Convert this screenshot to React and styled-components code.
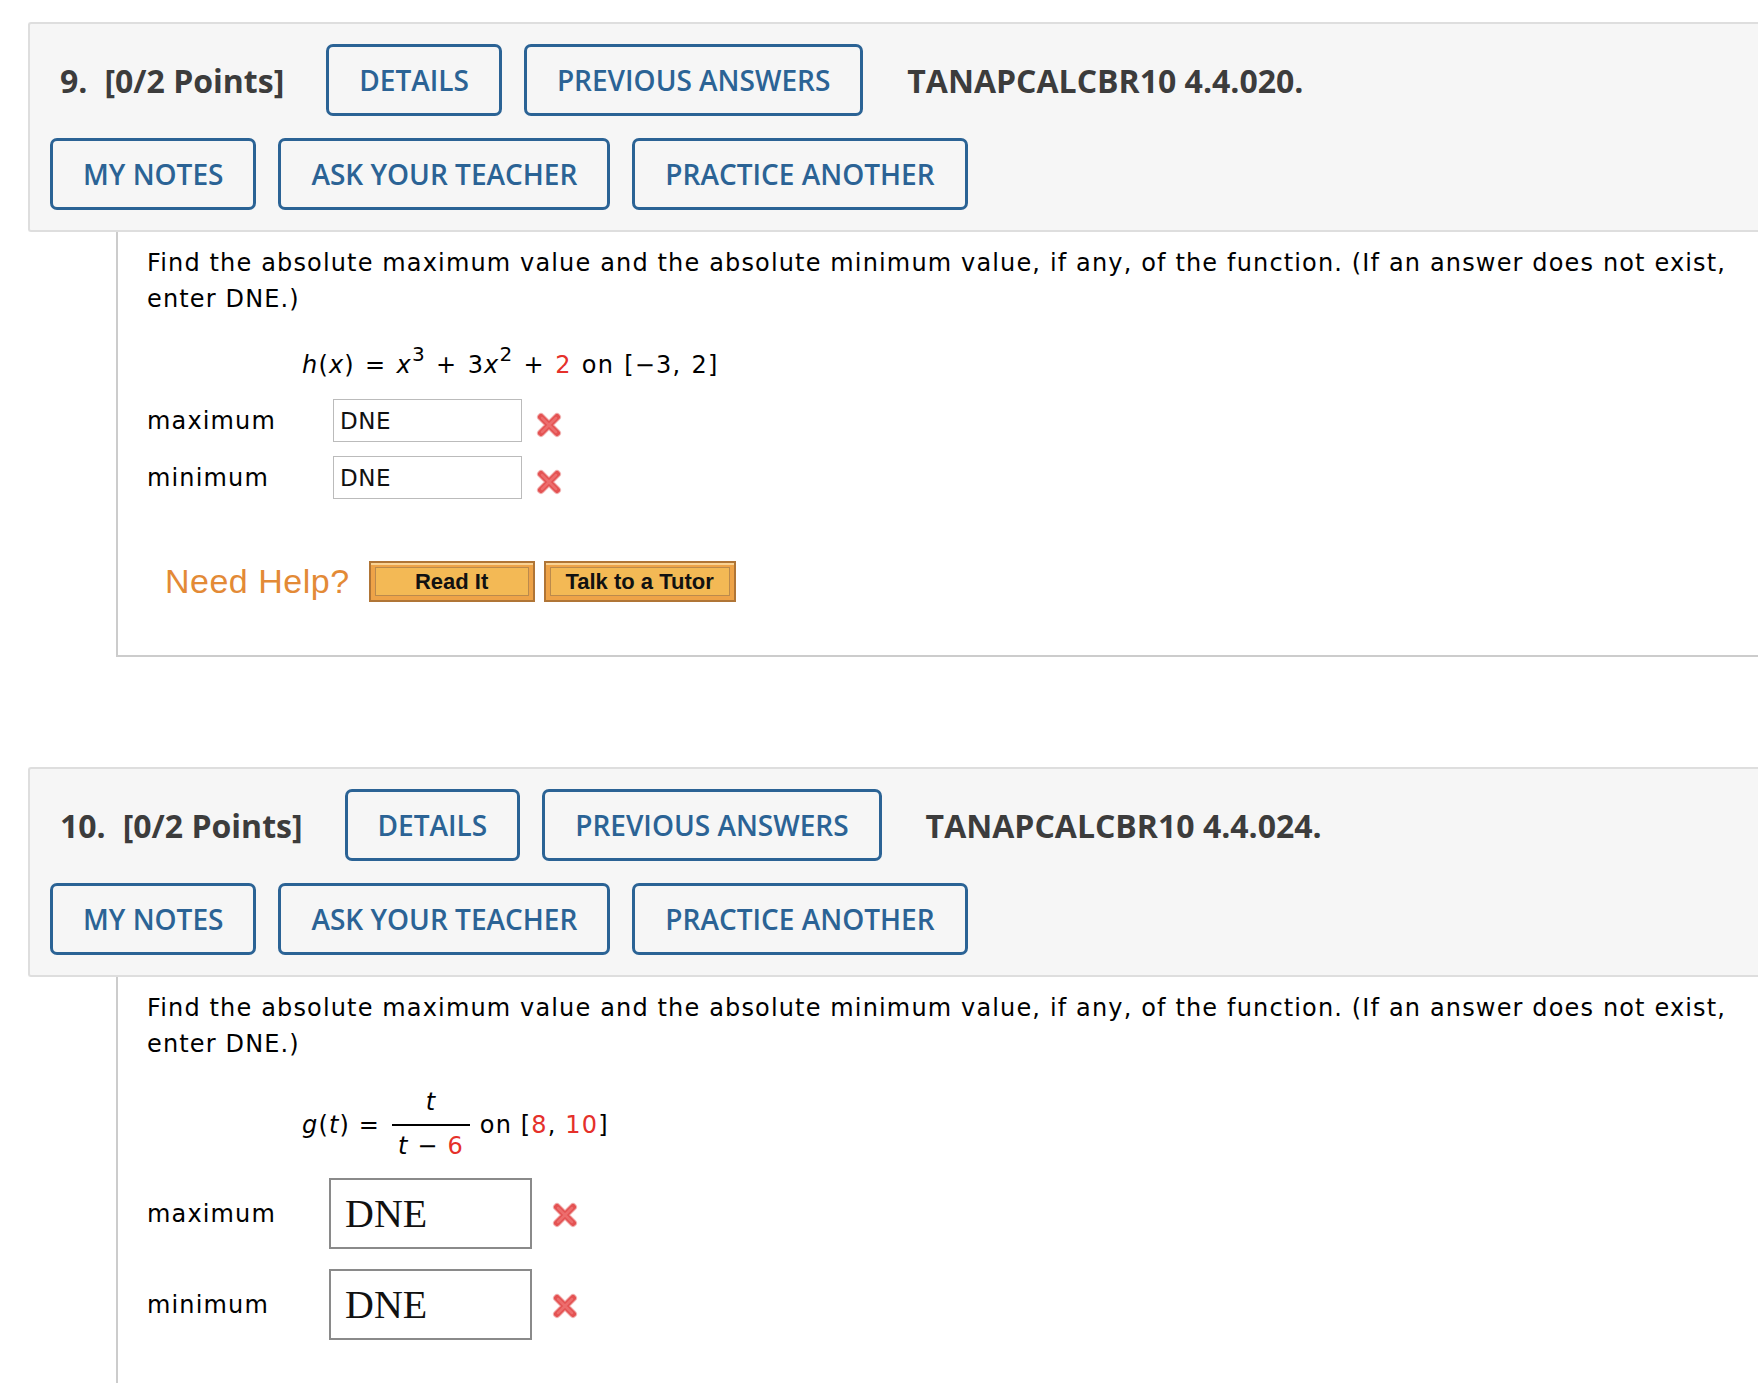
import React from 'react'
import styled, { createGlobalStyle } from 'styled-components'

const GlobalStyle = createGlobalStyle`
  html, body {
    margin: 0;
    padding: 0;
    background: #fff;
    overflow: hidden;
  }
`

const Page = styled.div`
  width: 1800px;
  padding: 22px 0 0 28px;
  box-sizing: border-box;
`

const Question = styled.section`
  display: flex;
  flex-direction: column;
  & + & {
    margin-top: 110px;
  }
`

const Header = styled.div`
  background: #f6f6f6;
  border: 2px solid #dedede;
  border-right: none;
  border-radius: 3px 0 0 3px;
  padding: 20px 0 20px 20px;
  display: flex;
  flex-direction: column;
  gap: 22px;
`

const HeaderRow = styled.div`
  display: flex;
  align-items: center;
  gap: 22px;
`

const Title = styled.h2`
  margin: 0 20px 0 10px;
  font-family: 'Open Sans', sans-serif;
  font-weight: 700;
  font-size: 32px;
  color: #3c3c3c;
  display: flex;
  gap: 17px;
`

const Ref = styled.span`
  margin-left: 22px;
  font-family: 'Open Sans', sans-serif;
  font-weight: 700;
  font-size: 32px;
  color: #3c3c3c;
`

const ActionButton = styled.button`
  height: 72px;
  box-sizing: border-box;
  padding: 0 30px;
  border: 3px solid #2b6395;
  border-radius: 7px;
  background: transparent;
  color: #2b6395;
  font-family: 'Open Sans', sans-serif;
  font-weight: 600;
  font-size: 28px;
  cursor: pointer;
`

const Body = styled.div`
  margin-left: 88px;
  border-left: 2px solid #cccccc;
  border-bottom: ${p => (p.$closed ? '2px solid #cccccc' : 'none')};
  padding: 13px 0 ${p => (p.$closed ? '53px' : '43px')} 29px;
  font-family: 'DejaVu Sans', Verdana, sans-serif;
  font-size: 24px;
  letter-spacing: 1.15px;
  color: #000;
`

const Prompt = styled.p`
  margin: 0;
  width: 1600px;
  line-height: 36px;
`

const Formula = styled.div`
  margin-top: ${p => p.$top}px;
  padding-left: 155px;
  line-height: 36px;
  word-spacing: ${p => p.$spread || 0}px;
`

const Var = styled.i`
  font-style: italic;
`

const Red = styled.span`
  color: #e5302a;
`

const Sup = styled.sup`
  font-size: 20px;
  line-height: 0;
  vertical-align: 12px;
`

const Fraction = styled.span`
  display: inline-flex;
  flex-direction: column;
  align-items: stretch;
  vertical-align: 23px;
  margin: 0 10px 0 12px;
  line-height: 28px;
`

const Numerator = styled.span`
  text-align: center;
  padding: 0 6px 8px;
  border-bottom: 2px solid #000;
`

const Denominator = styled.span`
  text-align: center;
  padding: 6px 6px 0;
`

const Answers = styled.div`
  display: grid;
  grid-template-columns: ${p => p.$label}px auto 1fr;
  align-items: center;
  row-gap: ${p => p.$gap}px;
  margin-top: ${p => p.$top}px;
`

const Label = styled.span`
  line-height: 36px;
`

const AnswerBox = styled.div`
  box-sizing: border-box;
  width: ${p => (p.$large ? 203 : 189)}px;
  height: ${p => (p.$large ? 71 : 43)}px;
  border: ${p => (p.$large ? '2px solid #8a8a8a' : '1px solid #bbbbbb')};
  padding-left: ${p => (p.$large ? 14 : 6)}px;
  display: flex;
  align-items: center;
  font-family: ${p => (p.$large ? "'Liberation Serif', serif" : "'DejaVu Sans', sans-serif")};
  font-size: ${p => (p.$large ? 40 : 23)}px;
  letter-spacing: ${p => (p.$large ? 0 : 0.5)}px;
  color: #111;
  background: #fff;
`

const Mark = styled.svg`
  margin-left: ${p => p.$left}px;
  margin-top: ${p => p.$drop}px;
`

const HelpRow = styled.div`
  display: flex;
  align-items: center;
  margin-top: 62px;
  padding-left: 18px;
`

const NeedHelp = styled.span`
  font-family: 'Liberation Sans', Arial, sans-serif;
  font-size: 34px;
  color: #e38a36;
  letter-spacing: 0.5px;
  margin-right: 19px;
`

const HelpButton = styled.button`
  width: ${p => p.$w}px;
  height: 41px;
  margin-right: 9px;
  box-sizing: border-box;
  border: 2px solid #b07536;
  background: #f3b955;
  box-shadow: inset 0 2px 0 #f9d394, inset 0 0 0 4px #eea348, inset 0 0 0 5px #bb8a4c;
  font-family: 'Liberation Sans', Arial, sans-serif;
  font-weight: 700;
  font-size: 22px;
  letter-spacing: 0;
  color: #111;
  padding: 0;
  cursor: pointer;
`

const WrongMark = ({ size, left, drop }) => (
  <Mark width={size} height={size} viewBox="0 0 28 28" $left={left} $drop={drop}>
    <g strokeLinecap="round">
      <path d="M6 6 L22 22 M22 6 L6 22" stroke="#e87a7a" strokeWidth="8" opacity="0.55" />
      <path d="M6 6 L22 22 M22 6 L6 22" stroke="#e45252" strokeWidth="6" />
      <path d="M7 7 L21 21 M21 7 L7 21" stroke="#ef7474" strokeWidth="2.5" opacity="0.8" />
    </g>
  </Mark>
)

const QuestionHeader = ({ number, code }) => (
  <Header>
    <HeaderRow>
      <Title>
        <span>{number}.</span>
        <span>[0/2 Points]</span>
      </Title>
      <ActionButton>DETAILS</ActionButton>
      <ActionButton>PREVIOUS ANSWERS</ActionButton>
      <Ref>{code}</Ref>
    </HeaderRow>
    <HeaderRow>
      <ActionButton>MY NOTES</ActionButton>
      <ActionButton>ASK YOUR TEACHER</ActionButton>
      <ActionButton>PRACTICE ANOTHER</ActionButton>
    </HeaderRow>
  </Header>
)

const promptText =
  'Find the absolute maximum value and the absolute minimum value, if any, of the function. (If an answer does not exist, enter DNE.)'

const App = () => (
  <Page>
    <GlobalStyle />
    <Question>
      <QuestionHeader number={9} code="TANAPCALCBR10 4.4.020." />
      <Body $closed>
        <Prompt>{promptText}</Prompt>
        <Formula $top={30} $spread={1.5}>
          <Var>h</Var>(<Var>x</Var>) = <Var>x</Var>
          <Sup>3</Sup> + 3<Var>x</Var>
          <Sup>2</Sup> + <Red>2</Red> on [−3, 2]
        </Formula>
        <Answers $label={186} $gap={14} $top={16}>
          <Label>maximum</Label>
          <AnswerBox>DNE</AnswerBox>
          <WrongMark size={28} left={13} drop={8} />
          <Label>minimum</Label>
          <AnswerBox>DNE</AnswerBox>
          <WrongMark size={28} left={13} drop={8} />
        </Answers>
        <HelpRow>
          <NeedHelp>Need Help?</NeedHelp>
          <HelpButton $w={166}>Read It</HelpButton>
          <HelpButton $w={192}>Talk to a Tutor</HelpButton>
        </HelpRow>
      </Body>
    </Question>
    <Question>
      <QuestionHeader number={10} code="TANAPCALCBR10 4.4.024." />
      <Body>
        <Prompt>{promptText}</Prompt>
        <Formula $top={26}>
          <Var>g</Var>(<Var>t</Var>) =
          <Fraction>
            <Numerator>
              <Var>t</Var>
            </Numerator>
            <Denominator>
              <Var>t</Var> − <Red>6</Red>
            </Denominator>
          </Fraction>
          on [<Red>8</Red>, <Red>10</Red>]
        </Formula>
        <Answers $label={182} $gap={20} $top={18}>
          <Label>maximum</Label>
          <AnswerBox $large>DNE</AnswerBox>
          <WrongMark size={28} left={19} drop={2} />
          <Label>minimum</Label>
          <AnswerBox $large>DNE</AnswerBox>
          <WrongMark size={28} left={19} drop={2} />
        </Answers>
      </Body>
    </Question>
  </Page>
)

export default App
